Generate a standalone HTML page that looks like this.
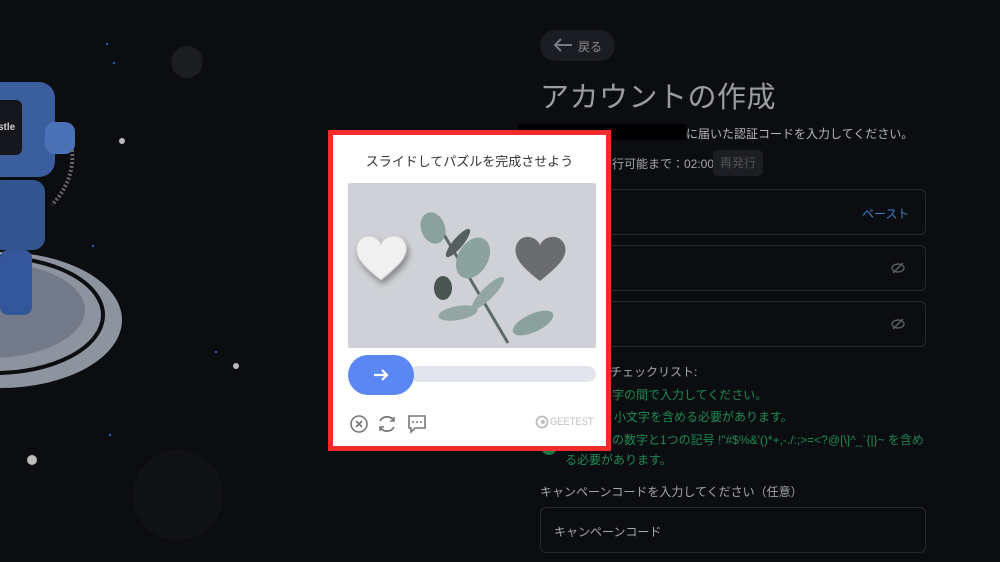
<!DOCTYPE html>
<html><head><meta charset="utf-8"><style>
*{margin:0;padding:0;box-sizing:border-box}
body{width:1000px;height:562px;overflow:hidden;background:#0c0d11;font-family:"Liberation Sans","Noto Sans CJK JP",sans-serif;position:relative;color:#9a9ca3}
.a{position:absolute}
.inp{position:absolute;left:540px;width:386px;height:46px;border:1px solid #26282e;border-radius:6px}
.g{color:#1f8a52;font-size:12px}
</style></head><body>
<svg class="a" style="left:0;top:0" width="330" height="562">
<ellipse cx="0" cy="320" rx="122" ry="68" fill="#8e93a0"/>
<ellipse cx="-5" cy="315" rx="108" ry="58" fill="none" stroke="#0c0d11" stroke-width="4"/>
<ellipse cx="-10" cy="310" rx="95" ry="48" fill="#737a8a"/>
<rect x="-20" y="82" width="75" height="95" rx="16" fill="#3b5f9e"/>
<rect x="-10" y="100" width="32" height="55" rx="6" fill="#15171c"/>
<text x="-2" y="130" font-size="10" font-weight="bold" fill="#ccc" font-family="Liberation Sans">stle</text>
<rect x="45" y="122" width="30" height="32" rx="10" fill="#4b72b6"/>
<rect x="-10" y="180" width="55" height="70" rx="12" fill="#32558f"/>
<rect x="0" y="250" width="32" height="65" rx="8" fill="#33579a"/>
<path d="M72 150 Q75 180 52 205" stroke="#666" stroke-width="4" fill="none" stroke-dasharray="2 2"/>
<circle cx="187" cy="62" r="16" fill="#1c1d21"/>
<circle cx="178" cy="495" r="45" fill="#111216"/>
<circle cx="122" cy="141" r="3" fill="#bbb"/><circle cx="236" cy="366" r="3" fill="#bbb"/><circle cx="32" cy="460" r="5" fill="#bbb"/>
<circle cx="107" cy="44" r="1.2" fill="#2b5cb8"/><circle cx="114" cy="63" r="1.2" fill="#2b5cb8"/><circle cx="93" cy="246" r="1.2" fill="#2b5cb8"/><circle cx="216" cy="352" r="1.2" fill="#2b5cb8"/><circle cx="110" cy="435" r="1.2" fill="#2b5cb8"/>
</svg>
<div class="a" style="left:540px;top:30px;width:75px;height:31px;border-radius:16px;background:#1c1d22"></div>
<svg class="a" style="left:552px;top:37px" width="22" height="16"><path d="M20 8H3M9 2L3 8l6 6" stroke="#777a80" stroke-width="2" fill="none"/></svg>
<div class="a" style="left:578px;top:38px;font-size:12px;color:#8a8c92">戻る</div>
<div class="a" style="left:540px;top:74px;font-size:29px;color:#9a9ca1;letter-spacing:.5px">アカウントの作成</div>
<div class="a" style="left:518px;top:124px;width:168px;height:16px;background:#000"></div>
<div class="a" style="left:686px;top:125px;font-size:12px;color:#b4b6bb">に届いた認証コードを入力してください。</div>
<div class="a" style="left:612px;top:155px;font-size:12px;color:#a4a6ab">行可能まで：02:00</div>
<div class="a" style="left:713px;top:150px;width:50px;height:26px;border-radius:5px;background:#1d1e23;color:#505257;font-size:12px;text-align:center;line-height:26px">再発行</div>
<div class="inp" style="top:189px"></div>
<div class="a" style="left:862px;top:205px;font-size:12px;color:#3f7dcc">ペースト</div>
<div class="inp" style="top:245px"></div>
<div class="inp" style="top:301px"></div>
<svg class="a" style="left:890px;top:261px" width="16" height="14"><ellipse cx="8" cy="7" rx="6" ry="4" stroke="#5a5c62" stroke-width="1.4" fill="none"/><path d="M3 12L13 2" stroke="#5a5c62" stroke-width="1.4"/></svg>
<svg class="a" style="left:890px;top:317px" width="16" height="14"><ellipse cx="8" cy="7" rx="6" ry="4" stroke="#5a5c62" stroke-width="1.4" fill="none"/><path d="M3 12L13 2" stroke="#5a5c62" stroke-width="1.4"/></svg>
<div class="a" style="left:610px;top:363px;font-size:12px;color:#a4a6ab">チェックリスト:</div>
<div class="a g" style="left:612px;top:386px">字の間で入力してください。</div>
<div class="a g" style="left:614px;top:408px">小文字を含める必要があります。</div>
<div class="a g" style="left:612px;top:431px">の数字と1つの記号 !"#$%&'()*+,-./:;&gt;=&lt;?@[\]^_`{|}~ を含め</div>
<div class="a g" style="left:565px;top:451px">る必要があります。</div>
<div class="a" style="left:541px;top:439px;width:16px;height:16px;border-radius:50%;background:#1d7a48"></div>
<div class="a" style="left:540px;top:483px;font-size:12px;color:#a4a6ab">キャンペーンコードを入力してください（任意）</div>
<div class="inp" style="top:507px"></div>
<div class="a" style="left:554px;top:523px;font-size:12px;color:#a4a6ab">キャンペーンコード</div>
<div class="a" style="left:328px;top:130px;width:283px;height:321px;background:#fff;border:5px solid #f22b2b"></div>
<div class="a" style="left:333px;top:151px;width:273px;text-align:center;font-size:13px;color:#333">スライドしてパズルを完成させよう</div>
<div class="a" style="left:348px;top:183px;width:248px;height:165px;background:#cfd1d6;border-radius:2px;overflow:hidden">
<svg width="248" height="165">
<path d="M95 50 L160 160" stroke="#5d6b68" stroke-width="3"/>
<ellipse cx="85" cy="45" rx="12" ry="16" fill="#8aa19c" transform="rotate(-20 85 45)"/>
<ellipse cx="125" cy="75" rx="15" ry="22" fill="#8ca29e" transform="rotate(30 125 75)"/>
<ellipse cx="95" cy="105" rx="9" ry="12" fill="#4a5552"/>
<ellipse cx="140" cy="110" rx="6" ry="22" fill="#93a6a2" transform="rotate(45 140 110)"/>
<ellipse cx="110" cy="130" rx="20" ry="7" fill="#93a6a2" transform="rotate(-10 110 130)"/>
<ellipse cx="185" cy="140" rx="22" ry="9" fill="#8aa19c" transform="rotate(-25 185 140)"/>
<ellipse cx="110" cy="60" rx="5" ry="18" fill="#555f5d" transform="rotate(40 110 60)"/>
<path d="M192 98 C175 85 165 75 168 63 C172 50 188 52 192 62 C196 52 213 50 217 63 C220 75 208 85 192 98Z" fill="#6b6c70"/>
<path d="M33 97 C16 84 6 74 9 62 C13 49 29 51 33 61 C37 51 54 49 58 62 C61 74 49 84 33 97Z" fill="#f0f0f0" stroke="#ccc" style="filter:drop-shadow(2px 4px 3px rgba(0,0,0,.35))"/>
</svg></div>
<div class="a" style="left:410px;top:366px;width:186px;height:16px;background:#e2e5ec;border-radius:8px"></div>
<div class="a" style="left:348px;top:355px;width:66px;height:40px;background:#5b87f4;border-radius:20px"></div>
<svg class="a" style="left:371px;top:366px" width="20" height="18"><path d="M3 9H16M11 4l5 5-5 5" stroke="#fff" stroke-width="2.2" fill="none"/></svg>
<svg class="a" style="left:349px;top:413px" width="80" height="22">
<circle cx="10" cy="11" r="8" stroke="#777" stroke-width="1.6" fill="none"/><path d="M7 8l6 6M13 8l-6 6" stroke="#777" stroke-width="1.6"/>
<path d="M31 8a8 8 0 0 1 14 0M45 14a8 8 0 0 1-14 0" stroke="#777" stroke-width="1.8" fill="none"/><path d="M45 4v4h-4M31 18v-4h4" stroke="#777" stroke-width="1.6" fill="none"/>
<path d="M60 3h16v12h-10l-4 4v-4h-2z" stroke="#777" stroke-width="1.6" fill="none"/><circle cx="64" cy="9" r="1" fill="#777"/><circle cx="68" cy="9" r="1" fill="#777"/><circle cx="72" cy="9" r="1" fill="#777"/>
</svg>
<svg class="a" style="left:535px;top:415px" width="14" height="14"><circle cx="7" cy="7" r="5.5" stroke="#bbb" stroke-width="1.8" fill="none"/><circle cx="8" cy="7" r="2" fill="#bbb"/></svg>
<div class="a" style="left:550px;top:416px;font-size:11px;color:#c2c2c2;transform:scaleX(.85);transform-origin:left">GEETEST</div>
</body></html>
